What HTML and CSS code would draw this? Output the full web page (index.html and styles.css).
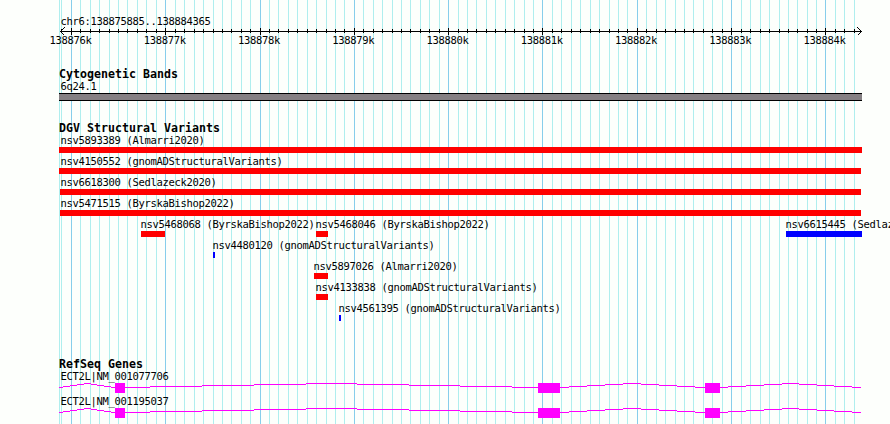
FILE: index.html
```
<!DOCTYPE html>
<html lang="en">
<head>
<meta charset="utf-8">
<title>chr6:138875885..138884365</title>
<link rel="stylesheet" href="styles.css">
</head>
<body>
<main class="panel">
  <svg class="grid" width="890" height="424" aria-hidden="true">
    <path class="minor" d="M59.5 0V424M61.5 0V424M80.5 0V424M90.5 0V424M99.5 0V424M109.5 0V424M118.5 0V424M127.5 0V424M137.5 0V424M146.5 0V424M156.5 0V424M175.5 0V424M184.5 0V424M194.5 0V424M203.5 0V424M213.5 0V424M222.5 0V424M231.5 0V424M241.5 0V424M250.5 0V424M269.5 0V424M278.5 0V424M288.5 0V424M297.5 0V424M307.5 0V424M316.5 0V424M326.5 0V424M335.5 0V424M344.5 0V424M363.5 0V424M373.5 0V424M382.5 0V424M392.5 0V424M401.5 0V424M410.5 0V424M420.5 0V424M429.5 0V424M439.5 0V424M458.5 0V424M467.5 0V424M476.5 0V424M486.5 0V424M495.5 0V424M505.5 0V424M514.5 0V424M524.5 0V424M533.5 0V424M552.5 0V424M561.5 0V424M571.5 0V424M580.5 0V424M590.5 0V424M599.5 0V424M609.5 0V424M618.5 0V424M627.5 0V424M646.5 0V424M656.5 0V424M665.5 0V424M675.5 0V424M684.5 0V424M693.5 0V424M703.5 0V424M712.5 0V424M722.5 0V424M741.5 0V424M750.5 0V424M760.5 0V424M769.5 0V424M779.5 0V424M788.5 0V424M797.5 0V424M807.5 0V424M816.5 0V424M835.5 0V424M844.5 0V424M854.5 0V424"/>
    <path class="major" d="M71.5 0V424M165.5 0V424M260.5 0V424M354.5 0V424M448.5 0V424M542.5 0V424M637.5 0V424M731.5 0V424M825.5 0V424"/>
  </svg>

  <header class="ruler">
    <div class="label">chr6:138875885..138884365</div>
    <svg class="axis" width="890" height="9" aria-hidden="true">
      <path d="M60 4.5H861M64.5 .5L60.5 4.5L64.5 8.5M857.5 .5L861.5 4.5L857.5 8.5"/>
      <path d="M61.5 2V6M80.5 2V6M90.5 2V6M99.5 2V6M109.5 2V6M118.5 2V6M127.5 2V6M137.5 2V6M146.5 2V6M156.5 2V6M175.5 2V6M184.5 2V6M194.5 2V6M203.5 2V6M213.5 2V6M222.5 2V6M231.5 2V6M241.5 2V6M250.5 2V6M269.5 2V6M278.5 2V6M288.5 2V6M297.5 2V6M307.5 2V6M316.5 2V6M326.5 2V6M335.5 2V6M344.5 2V6M363.5 2V6M373.5 2V6M382.5 2V6M392.5 2V6M401.5 2V6M410.5 2V6M420.5 2V6M429.5 2V6M439.5 2V6M458.5 2V6M467.5 2V6M476.5 2V6M486.5 2V6M495.5 2V6M505.5 2V6M514.5 2V6M524.5 2V6M533.5 2V6M552.5 2V6M561.5 2V6M571.5 2V6M580.5 2V6M590.5 2V6M599.5 2V6M609.5 2V6M618.5 2V6M627.5 2V6M646.5 2V6M656.5 2V6M665.5 2V6M675.5 2V6M684.5 2V6M693.5 2V6M703.5 2V6M712.5 2V6M722.5 2V6M741.5 2V6M750.5 2V6M760.5 2V6M769.5 2V6M779.5 2V6M788.5 2V6M797.5 2V6M807.5 2V6M816.5 2V6M835.5 2V6M844.5 2V6M854.5 2V6"/>
      <path d="M71.5 1V8M165.5 1V8M260.5 1V8M354.5 1V8M448.5 1V8M542.5 1V8M637.5 1V8M731.5 1V8M825.5 1V8"/>
    </svg>
    <div class="ticks"><span>138876k</span><span>138877k</span><span>138878k</span><span>138879k</span><span>138880k</span><span>138881k</span><span>138882k</span><span>138883k</span><span>138884k</span></div>
  </header>

  <section class="bands">
    <h2>Cytogenetic Bands</h2>
    <div class="label">6q24.1</div>
    <div class="band"></div>
  </section>

  <section class="variants">
    <h2>DGV Structural Variants</h2>
    <div class="row"><div class="feature" style="--x:59px;--w:803px"><span class="text inset">nsv5893389 (Almarri2020)</span><i class="bar"></i></div></div>
    <div class="row"><div class="feature" style="--x:59px;--w:802px"><span class="text inset">nsv4150552 (gnomADStructuralVariants)</span><i class="bar"></i></div></div>
    <div class="row"><div class="feature" style="--x:60px;--w:801px"><span class="text">nsv6618300 (Sedlazeck2020)</span><i class="bar"></i></div></div>
    <div class="row"><div class="feature" style="--x:60px;--w:801px"><span class="text">nsv5471515 (ByrskaBishop2022)</span><i class="bar"></i></div></div>
    <div class="row">
      <div class="feature" style="--x:141px;--w:24px"><span class="text outset">nsv5468068 (ByrskaBishop2022)</span><i class="bar"></i></div>
      <div class="feature" style="--x:316px;--w:12px"><span class="text outset">nsv5468046 (ByrskaBishop2022)</span><i class="bar"></i></div>
      <div class="feature" style="--x:786px;--w:76px"><span class="text outset">nsv6615445 (Sedlazeck2020)</span><i class="bar gain"></i></div>
    </div>
    <div class="row"><div class="feature" style="--x:213px;--w:2px"><span class="text outset">nsv4480120 (gnomADStructuralVariants)</span><i class="bar gain"></i></div></div>
    <div class="row"><div class="feature" style="--x:314px;--w:14px"><span class="text outset">nsv5897026 (Almarri2020)</span><i class="bar"></i></div></div>
    <div class="row"><div class="feature" style="--x:316px;--w:12px"><span class="text outset">nsv4133838 (gnomADStructuralVariants)</span><i class="bar"></i></div></div>
    <div class="row"><div class="feature" style="--x:339px;--w:2px"><span class="text outset">nsv4561395 (gnomADStructuralVariants)</span><i class="bar gain"></i></div></div>
  </section>

  <section class="genes">
    <h2>RefSeq Genes</h2>
    <div class="gene">
      <div class="label">ECT2L|NM_001077706</div>
      <svg width="890" height="10" aria-hidden="true">
        <g id="transcript">
          <path class="intron" d="M59 4.5H63m0-1H70m0-1H77m0-1H84m0-1H91m0 1H97m0 1H104m0 1H111m0 1H150m0-1H202m0-1H254m0-1H306m0-1H357m0 1H409m0 1H460m0 1H512m0 1H569m0-1H587m0-1H605m0-1H623m0-1H641m0 1H659m0 1H677m0 1H695m0 1H728m0-1H746m0-1H764m0-1H782m0-1H799m0 1H817m0 1H834m0 1H852m0 1H861"/>
          <path class="exon" d="M115 0h10v10h-10zM538 0h22v10h-22zM705 0h15v10h-15z"/>
        </g>
      </svg>
    </div>
    <div class="gene">
      <div class="label">ECT2L|NM_001195037</div>
      <svg width="890" height="10" aria-hidden="true"><use href="#transcript"/></svg>
    </div>
  </section>
</main>
</body>
</html>
```
FILE: styles.css
```
* { box-sizing: border-box; }
body {
  margin: 0;
  background: #fdfffc;
  color: #000;
  font: 10.5px/10px "DejaVu Sans Mono", "Liberation Mono", monospace;
  letter-spacing: -0.32px;
}
svg { display: block; }
.panel {
  position: relative;
  width: 890px;
  height: 424px;
  padding-top: 16px;
  overflow: hidden;
}
.grid { position: absolute; inset: 0; z-index: -1; shape-rendering: crispEdges; }
.minor { stroke: #afeeee; }
.major { stroke: #87ceeb; }
.label { height: 12px; padding-left: 60.5px; white-space: pre; }
h2 {
  height: 14px;
  margin: 0;
  padding-left: 59px;
  font-size: 11.6px;
  line-height: 14px;
  letter-spacing: 0.016px;
}
.axis { margin-top: -1px; fill: none; stroke: #000; shape-rendering: crispEdges; }
.ticks {
  display: grid;
  grid-template-columns: repeat(9, 94.25px);
  margin: -1px 0 0 49.5px;
  height: 12px;
}
.bands { margin-top: 20px; }
.band {
  width: 803px;
  height: 8px;
  margin-left: 59px;
  border: solid #000;
  border-width: 1px 0;
  background: #858083;
}
.variants { margin-top: 20px; }
.row { display: grid; height: 21px; }
.feature { grid-area: 1 / 1; width: var(--w); margin-left: var(--x); }
.text { display: block; height: 12px; margin-left: 0.5px; white-space: pre; }
.inset { margin-left: 1.5px; }
.outset { margin-left: -0.5px; }
.bar { display: block; height: 6px; background: #f00; }
.gain { background: #00f; }
.genes { margin-top: 33px; }
.gene { height: 25px; }
.gene svg { shape-rendering: crispEdges; }
.intron { fill: none; stroke: #f0f; }
.exon { fill: #f0f; }
```
